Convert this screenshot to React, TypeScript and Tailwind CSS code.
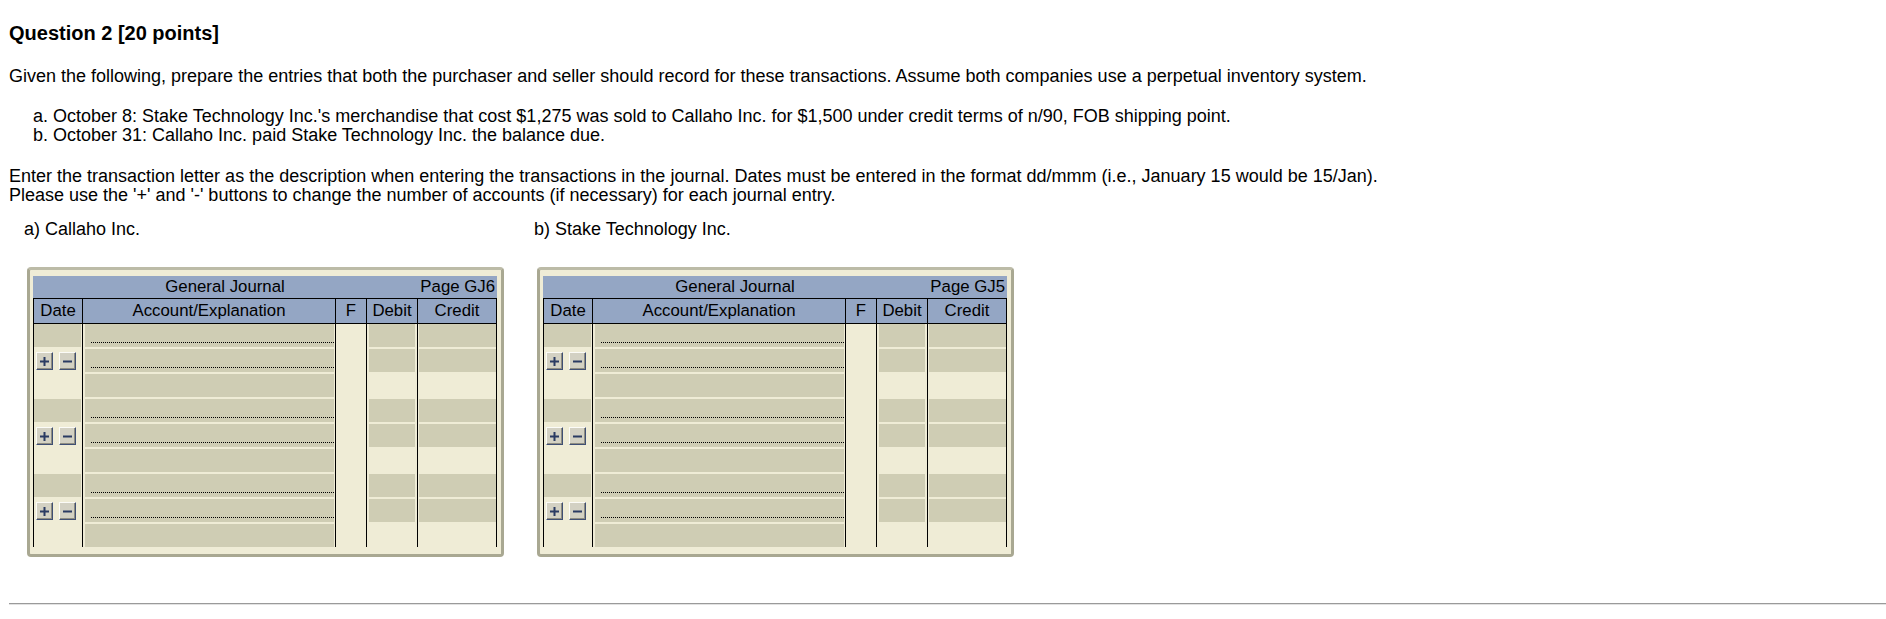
import React from "react";

const BLUE = "bg-[#94a6c4]";

function Btn({ kind }: { kind: "plus" | "minus" }) {
  return (
    <div className="w-[17px] h-[18px] bg-[#d3d1c3] border border-t-[#fbfbf7] border-l-[#fbfbf7] border-r-[#3f4f74] border-b-[#3f4f74] shadow-[inset_-1px_-1px_0_#8e8d82] flex items-center justify-center">
      <svg width="11" height="11" viewBox="0 0 11 11">
        <rect x="1" y="4.5" width="9" height="2" fill="#2a3b63" />
        {kind === "plus" && <rect x="4.5" y="1" width="2" height="9" fill="#2a3b63" />}
      </svg>
    </div>
  );
}

function Gray({ className, dotted }: { className: string; dotted?: boolean }) {
  return (
    <div className={`bg-[#cfcdb4] h-[23px] ${className}`}>
      {dotted && (
        <div className="h-full flex items-end pb-[4px] pl-[6px]">
          <div className="w-full h-0 border-b border-dotted border-black" />
        </div>
      )}
    </div>
  );
}

function Journal({ page }: { page: string }) {
  const grid = "grid grid-cols-[49px_253px_31px_51px_80px]";
  const rows: number[] = [];
  for (let g = 0; g < 3; g++) for (let r = 0; r < 3; r++) rows.push(r);
  return (
    <div className="ml-[3px] mt-[28px] w-[477px] bg-[#efecd6] border-[3px] border-[#a9a892] border-t-[#bcbba7] rounded-[4px] pt-[6px] pl-[3px] pr-[4px] pb-[7px] text-[16.8px] leading-[19.3px]">
      <div className="w-[464px]">
        <div className={`${BLUE} h-[22px] flex leading-[22px]`}>
          <div className="w-[384px] text-center">General Journal</div>
          <div className="w-[80px] text-right pr-[2px]">Page {page}</div>
        </div>
        <div className={`${grid} ${BLUE} h-[26px] border-t border-b border-black leading-[24px]`}>
          <div className="border-l border-black text-center">Date</div>
          <div className="border-l border-black text-center">Account/Explanation</div>
          <div className="border-l border-black text-center">F</div>
          <div className="border-l border-black text-center">Debit</div>
          <div className="border-l border-r border-black text-center">Credit</div>
        </div>
        {rows.map((r, i) => (
          <div key={i} className={`${grid} ${i === 8 ? "h-[23px]" : "h-[25px]"}`}>
            <div className="border-l border-black">
              {r === 0 && <Gray className="w-[47px]" />}
              {r === 1 && (
                <div className="flex gap-[6px] pl-[2px] pt-[3px]">
                  <Btn kind="plus" />
                  <Btn kind="minus" />
                </div>
              )}
            </div>
            <div className="border-l border-black">
              <Gray className="ml-[2px] w-[249px]" dotted={r < 2} />
            </div>
            <div className="border-l border-black" />
            <div className="border-l border-black">{r < 2 && <Gray className="ml-[2px] w-[46px]" />}</div>
            <div className="border-l border-r border-black">{r < 2 && <Gray className="ml-[1px] w-[77px]" />}</div>
          </div>
        ))}
      </div>
    </div>
  );
}

export default function App() {
  return (
    <div className="bg-white w-full min-h-[619px] pl-[9px] pt-[22px] text-black [font-family:'Liberation_Sans',Arial,sans-serif] text-[18px] leading-[19.5px]">
      <h2 className="text-[20px] leading-[23px] font-bold">Question 2 [20 points]</h2>
      <p className="mt-[22px]">
        Given the following, prepare the entries that both the purchaser and seller should record for these transactions. Assume both companies use a perpetual inventory system.
      </p>
      <div className="mt-[20px] pl-[24px]">
        <div>a. October 8: Stake Technology Inc.'s merchandise that cost $1,275 was sold to Callaho Inc. for $1,500 under credit terms of n/90, FOB shipping point.</div>
        <div>b. October 31: Callaho Inc. paid Stake Technology Inc. the balance due.</div>
      </div>
      <div className="mt-[21px]">
        <div>Enter the transaction letter as the description when entering the transactions in the journal. Dates must be entered in the format dd/mmm (i.e., January 15 would be 15/Jan).</div>
        <div>Please use the '+' and '-' buttons to change the number of accounts (if necessary) for each journal entry.</div>
      </div>
      <div className="mt-[14px] pl-[15px] flex gap-[30px]">
        <div className="w-[480px]">
          <div>a) Callaho Inc.</div>
          <Journal page="GJ6" />
        </div>
        <div className="w-[480px]">
          <div>b) Stake Technology Inc.</div>
          <Journal page="GJ5" />
        </div>
      </div>
      <div className="mt-[46px] h-[2px] border-t border-t-[#9a9a9a] border-b border-b-[#e2e2e2]" />
    </div>
  );
}
